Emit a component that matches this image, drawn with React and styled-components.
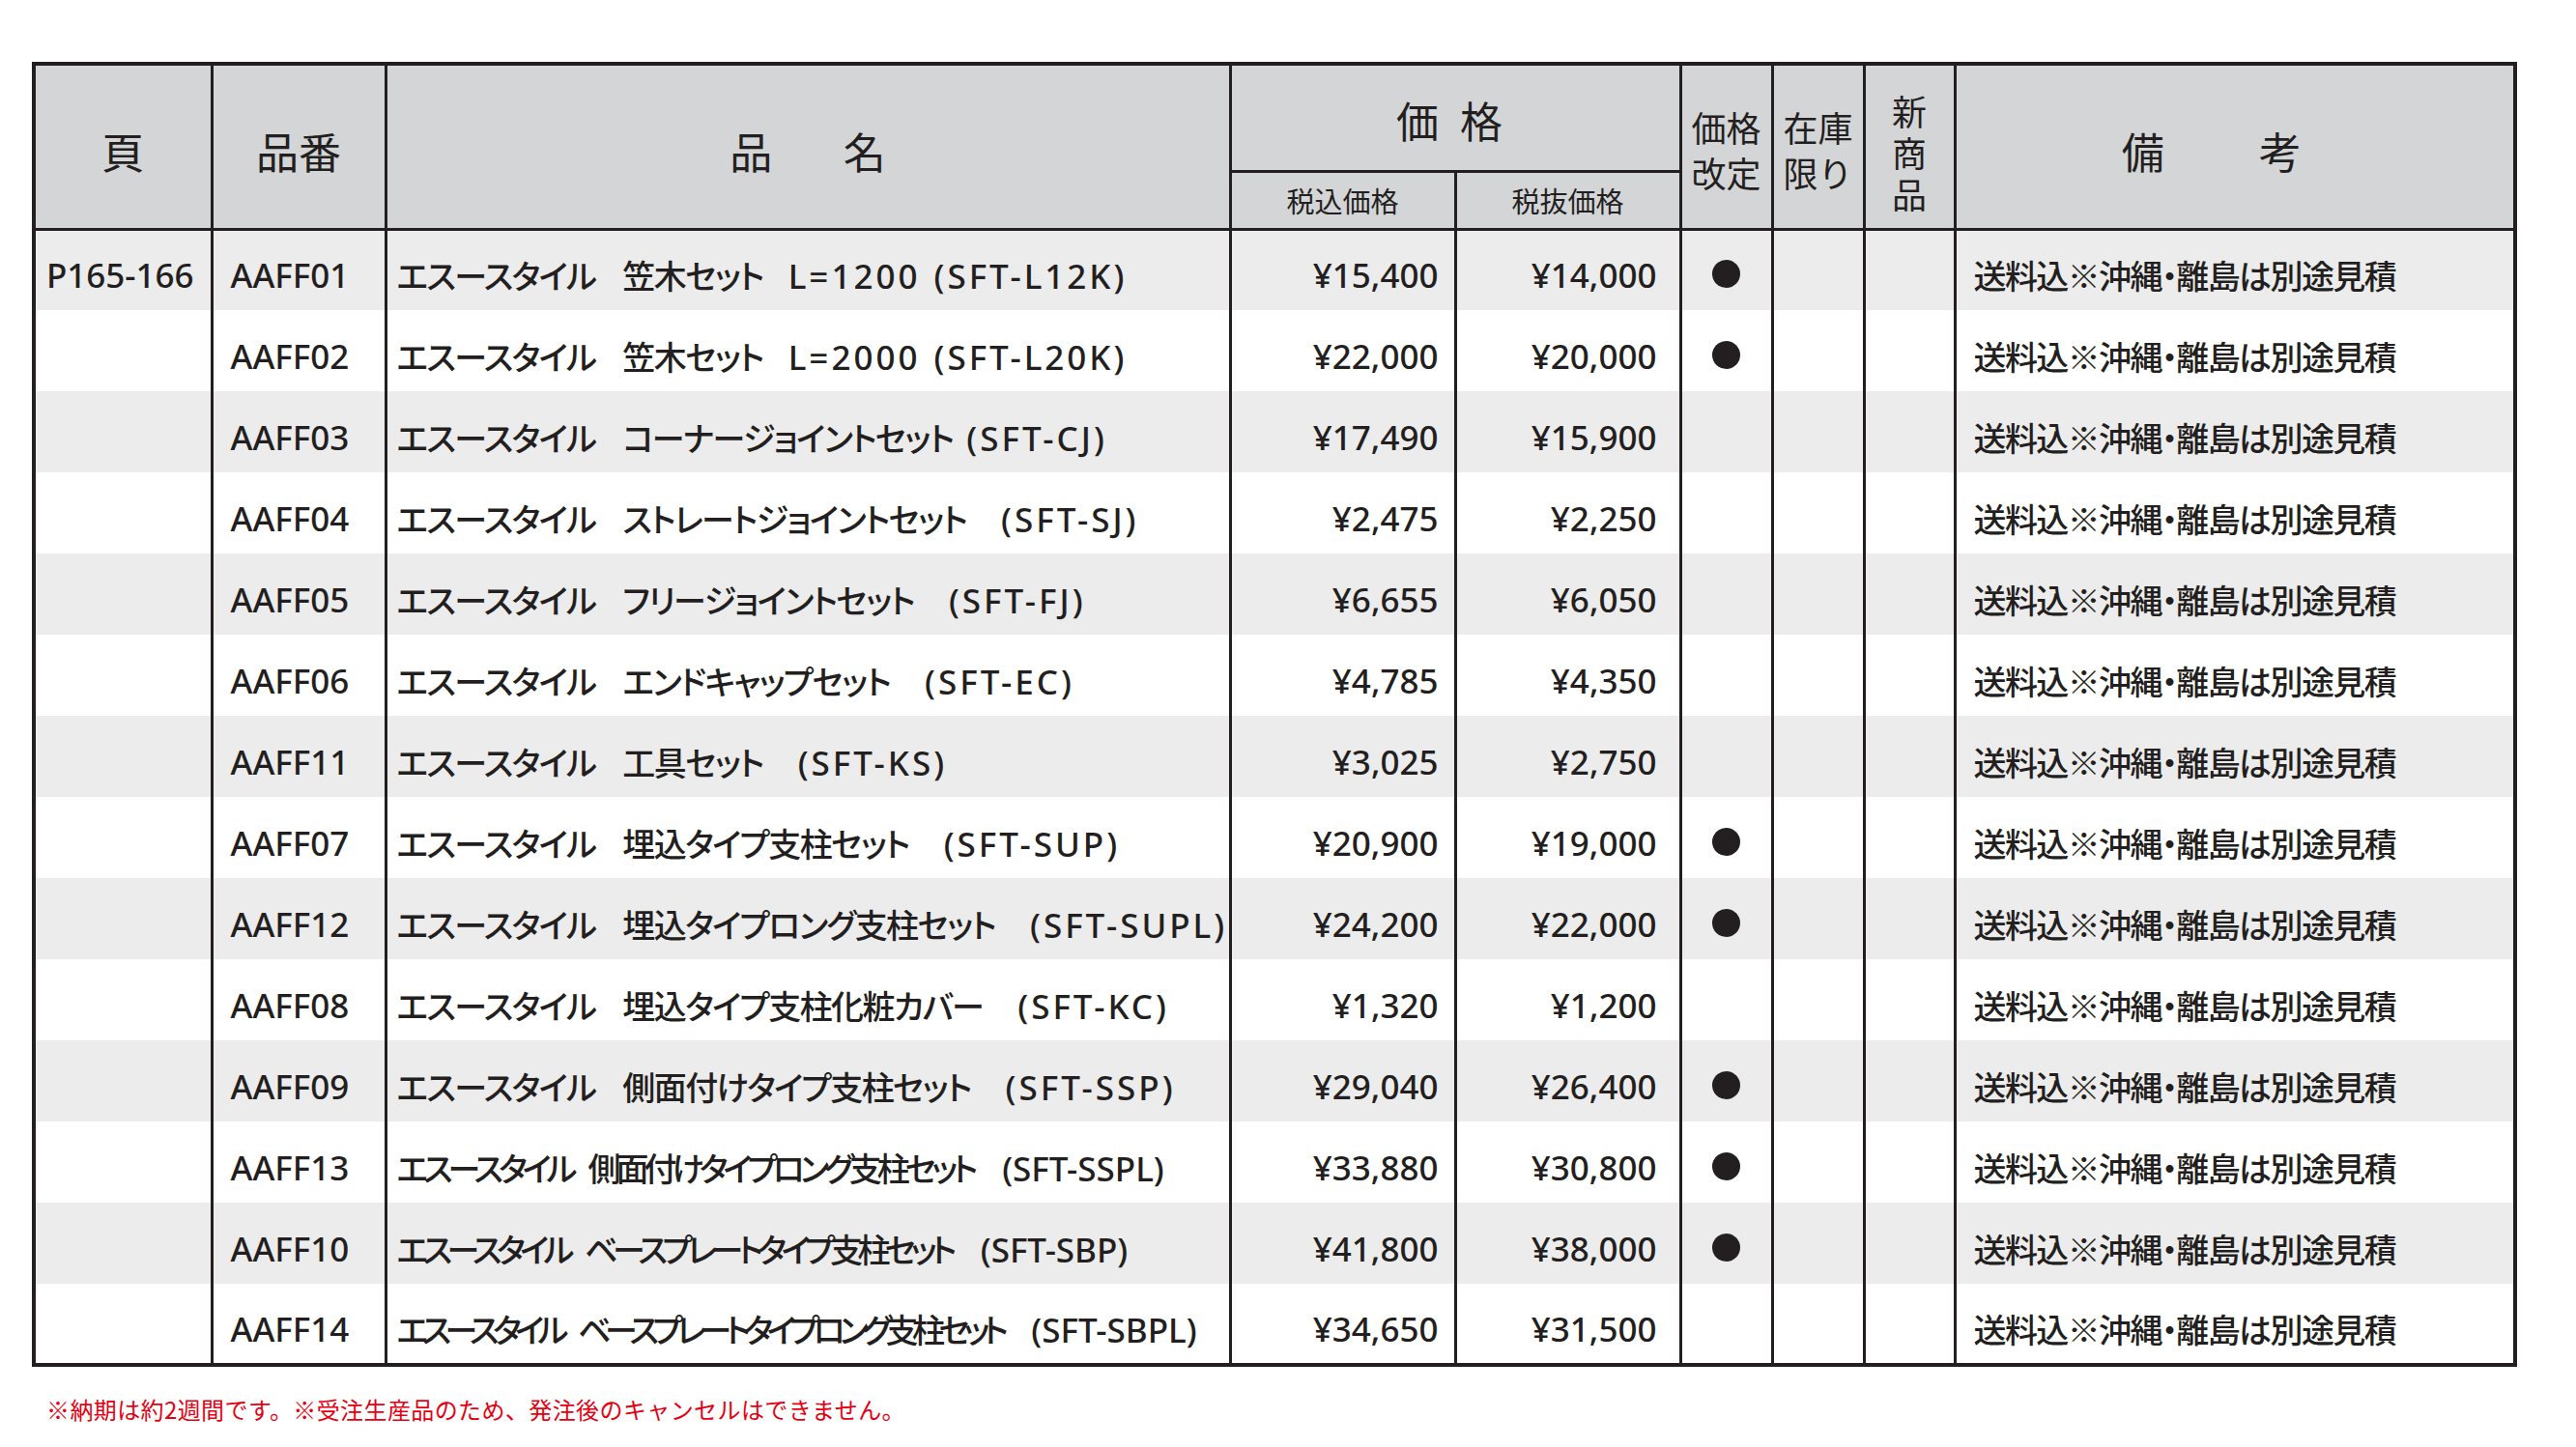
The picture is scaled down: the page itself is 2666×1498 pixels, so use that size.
import React from 'react';
import styled, { createGlobalStyle } from 'styled-components';

const GlobalStyle = createGlobalStyle`
  html, body {
    margin: 0;
    padding: 0;
    background: #ffffff;
  }
  body {
    font-family: "Noto Sans CJK JP", "Noto Sans", sans-serif;
    color: #231f20;
  }
`;

const INK = '#231f20';
const LATIN = '"Noto Sans", "Noto Sans CJK JP", sans-serif';
const JP = '"Noto Sans CJK JP", "Noto Sans", sans-serif';

const Page = styled.div`
  padding: 64px 0 0 33px;
  width: 2580px;
`;

const Table = styled.table`
  border-collapse: collapse;
  table-layout: fixed;
  width: 2568px;
  border: 4px solid ${INK};
`;

const HeadCell = styled.th`
  background: #d4d5d7;
  border: 3px solid ${INK};
  font-family: ${JP};
  font-weight: 400;
  font-size: ${({ size }) => size || 44}px;
  line-height: ${({ lh }) => lh || 1.2};
  padding: ${({ pad }) => pad || '10px 0 0'};
  text-align: center;
  vertical-align: middle;
  white-space: pre;
`;

const SubHeadRow = styled.tr`
  height: 60px;
`;

const Row = styled.tr`
  height: 84px;
  background: ${({ striped }) => (striped ? '#ececec' : '#ffffff')};
`;

const Cell = styled.td`
  border-left: 3px solid ${INK};
  border-right: 3px solid ${INK};
  font-family: ${LATIN};
  font-size: 35px;
  font-weight: 500;
  padding: 10px ${({ padRight }) => padRight || 0}px 0 ${({ padLeft }) => padLeft || 0}px;
  text-align: ${({ align }) => align || 'left'};
  vertical-align: middle;
  white-space: pre;
  overflow: visible;
`;

const Jp = styled.span`
  font-family: ${JP};
  font-size: 34px;
  font-feature-settings: "palt";
  letter-spacing: ${({ squeeze }) => squeeze ?? -1.6}px;
  margin-left: ${({ gap }) => gap || 0}px;
`;

const Latin = styled.span`
  letter-spacing: ${({ condensed }) => (condensed ? '0' : '3px')};
  margin-left: ${({ gap }) => gap || 0}px;
`;

const Dot = styled.span`
  display: inline-block;
  width: 29px;
  height: 29px;
  border-radius: 50%;
  background: ${INK};
`;

const Note = styled.p`
  margin: 26px 0 0 15px;
  color: #e60012;
  font-family: ${JP};
  font-size: 24px;
  font-weight: 400;
  letter-spacing: 0.4px;
`;

const rows = [
  { page: 'P165-166', code: 'AAFF01', item: '笠木セット', spec: 'L=1200', model: 'SFT-L12K', inc: '¥15,400', ex: '¥14,000', revised: true },
  { code: 'AAFF02', item: '笠木セット', spec: 'L=2000', model: 'SFT-L20K', inc: '¥22,000', ex: '¥20,000', revised: true },
  { code: 'AAFF03', item: 'コーナージョイントセット', model: 'SFT-CJ', inc: '¥17,490', ex: '¥15,900' },
  { code: 'AAFF04', item: 'ストレートジョイントセット', model: 'SFT-SJ', wide: true, inc: '¥2,475', ex: '¥2,250' },
  { code: 'AAFF05', item: 'フリージョイントセット', model: 'SFT-FJ', wide: true, inc: '¥6,655', ex: '¥6,050' },
  { code: 'AAFF06', item: 'エンドキャップセット', model: 'SFT-EC', wide: true, inc: '¥4,785', ex: '¥4,350' },
  { code: 'AAFF11', item: '工具セット', model: 'SFT-KS', wide: true, inc: '¥3,025', ex: '¥2,750' },
  { code: 'AAFF07', item: '埋込タイプ支柱セット', model: 'SFT-SUP', wide: true, inc: '¥20,900', ex: '¥19,000', revised: true },
  { code: 'AAFF12', item: '埋込タイプロング支柱セット', model: 'SFT-SUPL', wide: true, inc: '¥24,200', ex: '¥22,000', revised: true },
  { code: 'AAFF08', item: '埋込タイプ支柱化粧カバー', model: 'SFT-KC', wide: true, inc: '¥1,320', ex: '¥1,200' },
  { code: 'AAFF09', item: '側面付けタイプ支柱セット', model: 'SFT-SSP', wide: true, inc: '¥29,040', ex: '¥26,400', revised: true },
  { code: 'AAFF13', item: '側面付けタイプロング支柱セット', model: 'SFT-SSPL', wide: true, inc: '¥33,880', ex: '¥30,800', revised: true, squeeze: -5 },
  { code: 'AAFF10', item: 'ベースプレートタイプ支柱セット', model: 'SFT-SBP', wide: true, inc: '¥41,800', ex: '¥38,000', revised: true, squeeze: -5.5 },
  { code: 'AAFF14', item: 'ベースプレートタイプロング支柱セット', model: 'SFT-SBPL', wide: true, inc: '¥34,650', ex: '¥31,500', squeeze: -6.5 },
];

const SERIES = 'エスースタイル';
const REMARK = '送料込※沖縄・離島は別途見積';

const ProductName = ({ row }) => {
  const condensed = row.squeeze !== undefined;
  return (
    <>
      <Jp squeeze={row.squeeze}>{SERIES}</Jp>
      <Jp squeeze={row.squeeze} gap={condensed ? 16 : 28}>{row.item}</Jp>
      {row.spec && <Latin gap={26}>{row.spec}</Latin>}
      <Latin condensed={condensed} gap={condensed ? 30 : row.wide ? 36 : 14}>({row.model})</Latin>
    </>
  );
};

const App = () => (
  <Page>
    <GlobalStyle />
    <Table>
      <colgroup>
        <col style={{ width: 184 }} />
        <col style={{ width: 180 }} />
        <col style={{ width: 874 }} />
        <col style={{ width: 233 }} />
        <col style={{ width: 233 }} />
        <col style={{ width: 95 }} />
        <col style={{ width: 95 }} />
        <col style={{ width: 94 }} />
        <col style={{ width: 580 }} />
      </colgroup>
      <thead>
        <tr style={{ height: 111 }}>
          <HeadCell rowSpan={2}>頁</HeadCell>
          <HeadCell rowSpan={2}>品番</HeadCell>
          <HeadCell rowSpan={2}>{'品　   名'}</HeadCell>
          <HeadCell colSpan={2} pad="6px 12px 0 0">{'価\u2002格'}</HeadCell>
          <HeadCell rowSpan={2} size={36} lh={1.3} pad="6px 0 0">{'価格\n改定'}</HeadCell>
          <HeadCell rowSpan={2} size={36} lh={1.3} pad="6px 0 0">{'在庫\n限り'}</HeadCell>
          <HeadCell rowSpan={2} size={36} lh={1.2} pad="12px 0 0">{'新\n商\n品'}</HeadCell>
          <HeadCell rowSpan={2} pad="10px 48px 0 0">{'備　　 考'}</HeadCell>
        </tr>
        <SubHeadRow>
          <HeadCell size={29} pad="0">税込価格</HeadCell>
          <HeadCell size={29} pad="0">税抜価格</HeadCell>
        </SubHeadRow>
      </thead>
      <tbody>
        {rows.map((r, i) => (
          <Row key={r.code} striped={i % 2 === 0}>
            <Cell align="center" padRight={6}>{r.page || ''}</Cell>
            <Cell padLeft={18}>{r.code}</Cell>
            <Cell padLeft={10}>
              <ProductName row={r} />
            </Cell>
            <Cell align="right" padRight={16}>{r.inc}</Cell>
            <Cell align="right" padRight={23}>{r.ex}</Cell>
            <Cell align="center">{r.revised ? <Dot /> : ''}</Cell>
            <Cell />
            <Cell />
            <Cell padLeft={18}>
              <Jp>{REMARK}</Jp>
            </Cell>
          </Row>
        ))}
      </tbody>
    </Table>
    <Note>※納期は約2週間です。※受注生産品のため、発注後のキャンセルはできません。</Note>
  </Page>
);

export default App;
